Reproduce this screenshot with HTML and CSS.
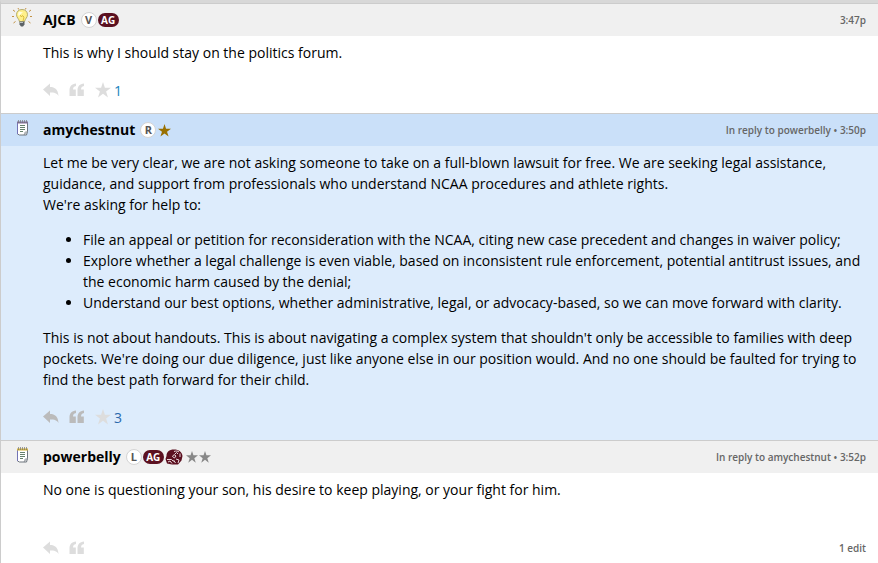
FILE: index.html
```html
<!DOCTYPE html>
<html lang="en">
<head>
<meta charset="utf-8">
<title>Forum thread</title>
<link rel="stylesheet" href="styles.css">
</head>
<body>
<svg class="defs" aria-hidden="true">
  <symbol id="reply" viewBox="0 0 16 14"><path d="M0 6.500 7 .5V4c5 0 8 2.500 8.500 9C14 10.200 11.500 9.500 7 9.500v3.500z"/></symbol>
  <symbol id="quote" viewBox="0 0 16 14"><path d="M7 .5v2.500C5 3.300 4 4.500 4 6.500h2.800V13H.5V7.500C.5 3.500 2.800.8 7 .5zM15 .5v2.500c-2 .3-3 1.500-3 3.500h2.800V13H8.500V7.500C8.500 3.500 10.800.8 15 .5z"/></symbol>
  <symbol id="star" viewBox="0 0 16 16"><path d="M8 0 9.900 5.800H16L11.100 9.500 13 15.500 8 11.800 3 15.500 4.900 9.500 0 5.800h6.100z"/></symbol>
  <symbol id="note" viewBox="0 0 13 16">
    <path d="M1.500 2.500h10v9l-1 3.500H3.500l-2-1z" fill="#fff" stroke="#6d747d"/>
    <path d="M1.500 2v12" stroke="#7373b5"/>
    <path d="M4 5.500h5M4 7.500h5M4 9.500h5M4 11.500h3" stroke="#65816c"/>
    <path d="M8 15l1-3 3-.5z" fill="#cfd4d7" stroke="#747b81" stroke-width=".5"/>
    <path d="M1 2.500h11" stroke-width="2"/>
    <path d="M2.500 0v3M4.500 0v3M6.500 0v3M8.500 0v3M10.500 0v3" stroke="#767676" stroke-width=".7"/>
  </symbol>
</svg>
<main class="thread">
  <article class="post">
    <header class="post-head">
      <svg class="avatar bulb" viewBox="0 0 20 20" aria-hidden="true">
        <path d="M1 2l2 1.500M19 2l-2 1.500M0 8.500h2M20 8.500h-2M1.500 15l2-1.500M18.500 15l-2-1.500M6 0l.7 1.500M14 0l-.7 1.500" stroke="#c29245" fill="none"/>
        <path d="M10 1.500c-3.500 0-5.500 2.400-5.500 5.200 0 3 2.500 4 3 7h5c.5-3 3-4 3-7 0-2.800-2-5.200-5.500-5.200z" fill="#fff08a" stroke="#a59c5a" stroke-width=".8"/>
        <path d="M7 3.500C5.800 5 6 7 7 8.500c1-2 2-3 4-4z" fill="#fffde0"/>
        <path d="M8 7l1.500 2 1-1.500L12 9l-1 4" stroke="#d0af29" fill="none" stroke-width=".8"/>
        <path d="M7.500 13.500h5v3L11 18.500H9l-1.500-2z" fill="#5c6266"/>
        <path d="M8 14.500h3" stroke="#b8c0c3"/>
      </svg>
      <a class="user" href="#">AJCB</a>
      <span class="badges"><span class="letter">V</span><span class="tag">AG</span></span>
      <span class="meta">3:47p</span>
    </header>
    <div class="content"><p>This is why I should stay on the politics forum.</p></div>
    <footer class="actions">
      <button type="button" aria-label="Reply"><svg class="icon"><use href="#reply"/></svg></button>
      <button type="button" aria-label="Quote"><svg class="icon"><use href="#quote"/></svg></button>
      <button type="button" class="like" aria-label="Star"><svg class="like-star"><use href="#star"/></svg></button>
      <a class="count" href="#">1</a>
    </footer>
  </article>
  <article class="post highlighted">
    <header class="post-head">
      <svg class="avatar note purple" aria-hidden="true"><use href="#note"/></svg>
      <a class="user" href="#">amychestnut</a>
      <span class="badges"><span class="letter">R</span><svg class="rank gold"><use href="#star"/></svg></span>
      <span class="meta">In reply to powerbelly • 3:50p</span>
    </header>
    <div class="content">
      <p>Let me be very clear, we are not asking someone to take on a full-blown lawsuit for free. We are seeking legal assistance, guidance, and support from professionals who understand NCAA procedures and athlete rights.<br>We're asking for help to:</p>
      <ul>
        <li>File an appeal or petition for reconsideration with the NCAA, citing new case precedent and changes in waiver policy;</li>
        <li>Explore whether a legal challenge is even viable, based on inconsistent rule enforcement, potential antitrust issues, and the economic harm caused by the denial;</li>
        <li>Understand our best options, whether administrative, legal, or advocacy-based, so we can move forward with clarity.</li>
      </ul>
      <p>This is not about handouts. This is about navigating a complex system that shouldn't only be accessible to families with deep pockets. We're doing our due diligence, just like anyone else in our position would. And no one should be faulted for trying to find the best path forward for their child.</p>
    </div>
    <footer class="actions">
      <button type="button" aria-label="Reply"><svg class="icon"><use href="#reply"/></svg></button>
      <button type="button" aria-label="Quote"><svg class="icon"><use href="#quote"/></svg></button>
      <button type="button" class="like" aria-label="Star"><svg class="like-star"><use href="#star"/></svg></button>
      <a class="count" href="#">3</a>
    </footer>
  </article>
  <article class="post">
    <header class="post-head">
      <svg class="avatar note yellow" aria-hidden="true"><use href="#note"/></svg>
      <a class="user" href="#">powerbelly</a>
      <span class="badges"><span class="letter">L</span><span class="tag">AG</span><svg class="helmet" viewBox="0 0 18 16" aria-hidden="true">
        <path d="M9 .5C4 .5 1.500 3 1.500 7L.5 10l1.500 4.500 5 1h6l3.500-4 1-4.500C17 3 14 .5 9 .5z" fill="#5b1020"/>
        <path d="M9 2.500c2-.8 4-.5 5 .5M10 5l1.500-1.500L13 5M7.500 7.500l1.500-2 2 1.500-1.500 2zM2 10.500h4.500l2 2M3 13l2-1 2 2.500M11 10l3 1-1 3M15 4.500v3.500M8.500 11l2 3" fill="none" stroke="#e7d6da"/>
      </svg><svg class="rank first"><use href="#star"/></svg><svg class="rank"><use href="#star"/></svg></span>
      <span class="meta">In reply to amychestnut • 3:52p</span>
    </header>
    <div class="content"><p>No one is questioning your son, his desire to keep playing, or your fight for him.</p><br></div>
    <footer class="actions">
      <button type="button" aria-label="Reply"><svg class="icon"><use href="#reply"/></svg></button>
      <button type="button" aria-label="Quote"><svg class="icon"><use href="#quote"/></svg></button>
      <span class="meta">1 edit</span>
    </footer>
  </article>
</main>
</body>
</html>
```
FILE: styles.css
```css
* { box-sizing: border-box; }
html { overflow: hidden; }
body {
  margin: 0;
  background: #fff;
  color: #000;
  font: 14px/21px "Open Sans", sans-serif;
}
a { color: inherit; text-decoration: none; }
p, ul { margin: 0 0 14px; }
p:last-child, .content p:has(+ br) { margin-bottom: 0; }
ul { padding-left: 40px; }
.defs { position: absolute; width: 0; height: 0; }
.thread {
  border-top: 3px solid #d8d8d8;
  border-left: 1px solid #ccc;
}
.post { border-top: 1px solid #ccc; }
.post-head {
  display: flex;
  align-items: center;
  height: 32px;
  padding: 0 12px 0 11px;
  background: #f0f0f0;
}
.avatar { width: 20px; height: 20px; flex: none; margin-bottom: 4px; }
.note { width: 13px; height: 16px; margin: 0 3px 4px 4px; }
.purple { stroke: #82719b; }
.yellow { stroke: #d5b43b; }
.user {
  margin-left: 11px;
  padding-bottom: 1px;
  font-weight: 700;
}
.badges { display: flex; align-items: center; margin-left: 5px; }
.letter {
  width: 16px;
  height: 16px;
  border: 1px solid #d4d4d4;
  border-radius: 50%;
  background: #fff;
  color: #555;
  font-size: 11px;
  font-weight: 700;
  line-height: 14px;
  text-align: center;
}
.tag {
  width: 21px;
  height: 14px;
  margin-left: 1px;
  border-radius: 7px;
  background: #5b1020;
  color: #fff;
  font-size: 10px;
  font-weight: 700;
  line-height: 14px;
  text-align: center;
}
.rank { width: 12px; height: 12px; margin-left: 1px; fill: #888; }
.gold { width: 13px; height: 13px; margin-left: 2px; fill: #997000; }
.first { margin-left: 3px; }
.helmet { width: 18px; height: 16px; margin-left: 1px; }
.meta {
  margin-left: auto;
  color: #666;
  font-size: 10px;
  font-weight: 600;
}
.content { padding: 6px 12px 0 42px; }
.actions {
  display: flex;
  align-items: center;
  height: 50px;
  padding: 4px 12px 0 42px;
}
.actions button {
  display: flex;
  margin: 0 10px 0 0;
  padding: 0;
  border: 0;
  background: none;
  color: #ddd;
}
.actions svg { fill: currentColor; }
.icon { width: 16px; height: 14px; }
.like-star { width: 16px; height: 16px; }
.actions .like { margin-right: 3px; }
.count { color: #1683bd; }
.highlighted { background: #ddecfc; }
.highlighted .post-head { background: #cae0f9; }
.highlighted .actions button { color: #bbb; }
.highlighted .actions .like { color: #ddd; }
.highlighted .count { color: #2c69ac; }
```
